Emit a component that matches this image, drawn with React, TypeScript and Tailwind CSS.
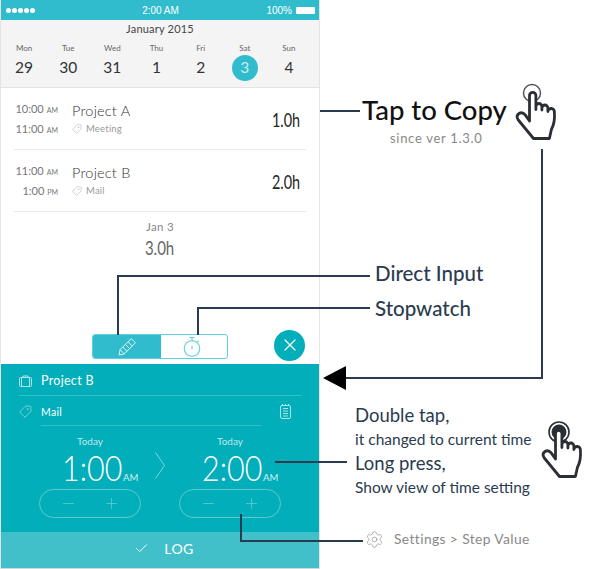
import { Check, Minus, Plus, Settings, Tag, X } from "lucide-react";

const sans = "font-['Lato','Noto_Sans',sans-serif]";

const days = [
  { name: "Mon", num: "29" },
  { name: "Tue", num: "30" },
  { name: "Wed", num: "31" },
  { name: "Thu", num: "1" },
  { name: "Fri", num: "2" },
  { name: "Sat", num: "3", active: true },
  { name: "Sun", num: "4" },
];

function Hand({ filled, className }: { filled?: boolean; className: string }) {
  return (
    <svg viewBox="0 0 60 70" fill="none" className={className}>
      {filled ? (
        <>
          <circle cx="23" cy="16" r="7.500" fill="#2b2f35" />
          <circle cx="23" cy="16" r="10" stroke="#2b2f35" strokeWidth="1.600" />
        </>
      ) : (
        <circle cx="22" cy="15" r="8.500" stroke="#555" strokeWidth="1.500" />
      )}
      <path
        d="M19.500 43V17.500a3.200 3.200 0 0 1 6.400 0V31.500v-3a3 3 0 0 1 6 0v3.500v-2a3 3 0 0 1 6 0v3.500a3.200 3.200 0 0 1 6.500 .5 c.6 8 -.5 13 -3 17.500l-2 9H23.500L8.300 42c-1.700-2.500-1.500-5 .7-6.500 2.200-1.400 4.500-.7 6.200 1.400z"
        fill="#fff"
        stroke="#2b2f35"
        strokeWidth="2.800"
        strokeLinejoin="round"
      />
    </svg>
  );
}

function TimeRow({ start, startAp, end, endAp, title, tag, total }: { start: string; startAp: string; end: string; endAp: string; title: string; tag: string; total: string }) {
  return (
    <div className="mx-[13px] flex h-[62px] items-center border-b border-[#e9e9e9] pt-px">
      <div className="flex w-[44px] flex-col items-end gap-[3px] text-[#777]">
        <div className="flex items-baseline whitespace-nowrap text-[11px] leading-4">
          {start}
          <span className="ml-[3px] text-[7px]">{startAp}</span>
        </div>
        <div className="flex items-baseline whitespace-nowrap text-[11px] leading-4">
          {end}
          <span className="ml-[3px] text-[7px]">{endAp}</span>
        </div>
      </div>
      <div className="ml-[14px] flex flex-col">
        <div className="text-[14.500px] leading-5 font-light tracking-[0.2px] text-[#333]">{title}</div>
        <div className="flex items-center gap-[4px] text-[9.500px] leading-4 tracking-[0.2px] text-[#999]">
          <Tag size={10} strokeWidth={1} className="-scale-x-100" />
          {tag}
        </div>
      </div>
      <div className="mr-[6px] ml-auto origin-right scale-x-[0.72] text-[20px] leading-6 text-[#222]">{total}</div>
    </div>
  );
}

function TimePicker({ time }: { time: string }) {
  return (
    <div className="flex w-[102px] flex-col">
      <div className="text-center text-[10px] leading-4 text-[#bfe9ec]">Today</div>
      <div className="flex h-[36px] items-baseline pl-[23px] whitespace-nowrap text-white">
        <span className="inline-block w-[59px] origin-left scale-x-[0.87] text-[35px] leading-[36px] font-light">{time}</span>
        <span className="ml-[2px] text-[9.500px] text-[#d5f1f3]">AM</span>
      </div>
      <div className="mt-[4px] flex h-[29px] w-[102px] items-center justify-between rounded-full border border-[#5fc9d1] px-[20px] text-[#6fd0d7]">
        <Minus size={17} strokeWidth={1} />
        <Plus size={17} strokeWidth={1} />
      </div>
    </div>
  );
}

export default function App() {
  return (
    <div className={`relative h-[569px] w-[600px] overflow-hidden bg-white ${sans}`}>
      {/* phone */}
      <div className="flex h-[569px] w-[320px] flex-col border-x border-[#e3e3e3]">
        <div className="flex h-[20px] shrink-0 items-center justify-between bg-[#30bccd] pr-[4px] pl-[5px] font-['Liberation_Sans',sans-serif] text-[10px] text-white">
          <div className="flex w-[60px] gap-[1px]">
            {[0, 1, 2, 3, 4].map((d) => (
              <span key={d} className="h-[5px] w-[5px] rounded-full bg-white" />
            ))}
          </div>
          <span className="font-medium">2:00 AM</span>
          <div className="flex w-[60px] items-center justify-end gap-[4px]">
            100%
            <span className="h-[7px] w-[19px] rounded-[1px] bg-white" />
          </div>
        </div>

        <div className="h-[68px] shrink-0 border-b border-[#e4e4e4] bg-[#f4f4f4]">
          <div className="pt-[1px] text-center text-[11px] leading-[15px] tracking-[0.2px] text-[#444]">January 2015</div>
          <div className="mt-[6px] grid w-[310px] grid-cols-7 pl-[1px]">
            {days.map((d) => (
              <div key={d.name} className="flex flex-col items-center">
                <span className="text-[8px] leading-[12px] text-[#666]">{d.name}</span>
                <span
                  className={
                    d.active
                      ? "mt-[1px] flex h-[26px] w-[26px] items-center justify-center rounded-full bg-[#30bccd] text-[15.500px] text-[#c7eef3]"
                      : "mt-[1px] flex h-[26px] w-[26px] items-center justify-center text-[15.500px] text-[#333]"
                  }
                >
                  {d.num}
                </span>
              </div>
            ))}
          </div>
        </div>

        <TimeRow start="10:00" startAp="AM" end="11:00" endAp="AM" title="Project A" tag="Meeting" total="1.0h" />
        <TimeRow start="11:00" startAp="AM" end="1:00" endAp="PM" title="Project B" tag="Mail" total="2.0h" />

        <div className="mt-[7px] flex flex-col items-center text-[#888]">
          <div className="text-[11.500px] leading-4 tracking-[0.3px]">Jan 3</div>
          <div className="scale-x-[0.75] text-[20px] leading-[24px] text-[#666]">3.0h</div>
        </div>

        <div className="mt-auto flex h-[32px] items-center pr-[14px] pl-[91px]">
          <div className="flex h-[25px] w-[136px] -translate-y-[2px] overflow-hidden rounded-[3px] border border-[#5fd0dd]">
            <div className="flex w-[68px] items-center justify-center bg-[#30bccd]">
              <svg viewBox="0 0 18 18" className="h-[19px] w-[19px]" fill="none" stroke="#e7f8fa" strokeWidth="0.9">
                <path d="M1 17l1-5L12.500 1.500l4 4L6 16z" />
                <path d="M2 12l4 4M4.500 9.500l4 4M7 7l4 4M9.500 4.500l4 4" />
              </svg>
            </div>
            <div className="flex flex-1 items-center justify-center">
              <svg viewBox="0 0 18 21" className="h-[21px] w-[18px] -translate-x-[2px]" fill="none" stroke="#5fd0dd" strokeWidth="1.100">
                <circle cx="9" cy="12.500" r="7.800" />
                <path d="M6.500 1.500h5M9 1.500v3.500M14.500 6l1-1.500M9 10v3.500" />
              </svg>
            </div>
          </div>
          <div className="ml-auto flex h-[31px] w-[31px] -translate-y-[3px] items-center justify-center rounded-full bg-[#02aeba] text-white">
            <X size={20} strokeWidth={1.5} />
          </div>
        </div>

        <div className="flex h-[168px] shrink-0 flex-col bg-[#02aeba] text-white">
          <div className="mr-[17px] ml-[18px] flex h-[32px] items-center border-b border-[#33bec8] pt-[3px]">
            <svg viewBox="0 0 13 12" className="h-[12px] w-[13px]" fill="none" stroke="#bfe9ec" strokeWidth="0.9">
              <rect x="0.500" y="2.500" width="12" height="9" rx="1" />
              <path d="M2.500 2.500v9M10.500 2.500v9M4 2.500V1h5v1.500" />
            </svg>
            <span className="ml-[9px] text-[12.500px] tracking-[0.3px]">Project B</span>
          </div>
          <div className="flex h-[30px] items-center pr-[28px] pl-[18px]">
            <Tag size={13} strokeWidth={1} className="-scale-x-100 text-[#d5f1f3]" />
            <div className="ml-[9px] flex h-[30px] w-[220px] items-center border-b border-[#33bec8] pt-[4px] text-[10.500px] tracking-[0.3px]">Mail</div>
            <svg viewBox="0 0 11 15" className="ml-auto h-[15px] w-[11px]" fill="none" stroke="#bfe9ec" strokeWidth="0.9">
              <rect x="0.500" y="1.500" width="10" height="13" rx="1.500" />
              <path d="M3 4.500h5M3 7h5M3 9.500h5M3 12h5M2.500 0v2M5.500 0v2M8.500 0v2" />
            </svg>
          </div>
          <div className="mt-[7px] flex pl-[38px]">
            <TimePicker time="1:00" />
            <svg viewBox="0 0 11 27" className="mt-[19px] mr-[13px] ml-[13px] h-[27px] w-[12px]" fill="none" stroke="#7fd7dd" strokeWidth="1">
              <path d="M1 0.500l9 13-9 13" />
            </svg>
            <TimePicker time="2:00" />
          </div>
        </div>

        <div className="flex h-[37px] shrink-0 items-center justify-center gap-[15px] border-b border-[#cfd8da] bg-[#42c0c9] pb-[3px] pl-[8px] text-white">
          <Check size={15} strokeWidth={1.5} />
          <span className="text-[14px] tracking-[0.4px]">LOG</span>
        </div>
      </div>

      {/* connector lines */}
      <div className="absolute top-[110px] left-[320px] h-[2px] w-[40px] bg-[#2a3b50]" />
      <div className="absolute top-[149px] left-[541px] h-[230px] w-[2px] bg-[#2a3b50]" />
      <div className="absolute top-[377px] left-[345px] h-[2px] w-[198px] bg-[#2a3b50]" />
      <div className="absolute top-[366px] left-[323px] h-0 w-0 border-y-[12px] border-r-[23px] border-y-transparent border-r-black" />
      <div className="absolute top-[275px] left-[117px] h-[60px] w-[2px] bg-[#2a3b50]" />
      <div className="absolute top-[275px] left-[117px] h-[2px] w-[253px] bg-[#2a3b50]" />
      <div className="absolute top-[307px] left-[197px] h-[28px] w-[2px] bg-[#2a3b50]" />
      <div className="absolute top-[307px] left-[197px] h-[2px] w-[173px] bg-[#2a3b50]" />
      <div className="absolute top-[461px] left-[275px] h-[2px] w-[72px] bg-[#2a3b50]" />
      <div className="absolute top-[514px] left-[240px] h-[28px] w-[2px] bg-[#2a3b50]" />
      <div className="absolute top-[540px] left-[240px] h-[2px] w-[123px] bg-[#2a3b50]" />

      {/* callouts */}
      <div className="absolute top-[93px] left-[362px] text-[27.500px] leading-[34px] font-medium whitespace-nowrap text-[#111]">Tap to Copy</div>
      <div className="absolute top-[130px] left-[390px] text-[13px] leading-4 tracking-[0.7px] whitespace-nowrap text-[#888]">since ver 1.3.0</div>
      <Hand className="absolute top-[78px] left-[510px] h-[70px] w-[60px]" />
      <div className="absolute top-[261px] left-[375px] text-[20.500px] leading-6 font-medium whitespace-nowrap text-[#2a3b50]">Direct Input</div>
      <div className="absolute top-[296px] left-[375px] text-[20.500px] leading-6 font-medium whitespace-nowrap text-[#2a3b50]">Stopwatch</div>
      <div className="absolute top-[404px] left-[355px] flex flex-col whitespace-nowrap text-[#2a3b50]">
        <span className="text-[18.500px] leading-[23px]">Double tap,</span>
        <span className="text-[15.500px] leading-[24px]">it changed to current time</span>
        <span className="text-[18.500px] leading-[24px]">Long press,</span>
        <span className="text-[15.500px] leading-[24px]">Show view of time setting</span>
      </div>
      <Hand filled className="absolute top-[416px] left-[536px] h-[70px] w-[60px]" />
      <div className="absolute top-[529px] left-[365px] flex items-center gap-[10px] whitespace-nowrap text-[13.800px] tracking-[0.4px] text-[#888]">
        <Settings size={19} strokeWidth={0.8} />
        Settings &gt; Step Value
      </div>
    </div>
  );
}
